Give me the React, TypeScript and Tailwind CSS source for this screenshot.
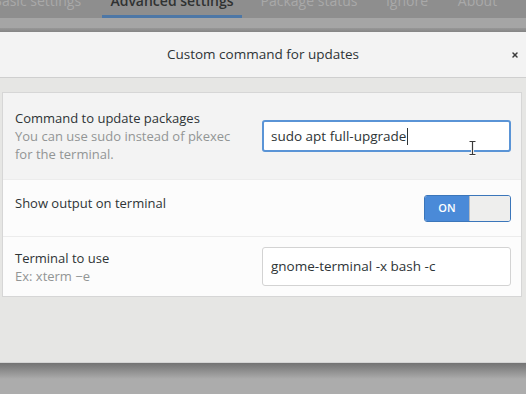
import { X } from "lucide-react";

function Tab({ label, width, active = false, className = "" }: { label: string; width: string; active?: boolean; className?: string }) {
  return (
    <div className={`flex h-[18px] shrink-0 flex-col items-center justify-between ${width} ${className}`}>
      <span className={`-mt-[6px] text-[14px] leading-[14px] whitespace-nowrap ${active ? "text-[13px] font-semibold text-[#303232]" : "text-[#a9a9a9]"}`}>
        {label}
      </span>
      <div className={`h-[3px] w-full ${active ? "bg-[#4d77a6]" : ""}`} />
    </div>
  );
}

function Switch() {
  return (
    <div className="flex h-[27px] w-[87px] overflow-hidden rounded-[3px] border border-[#3b76ba]">
      <div className="flex w-[44px] items-center justify-center bg-[#4a8ad8] text-[11px] font-semibold text-white">ON</div>
      <div className="flex-1 border-l border-[#b8bcc1] bg-[#eeeeed]" />
    </div>
  );
}

export default function App() {
  return (
    <div className="flex h-[394px] w-[526px] flex-col overflow-hidden bg-[#acacac] font-['Open_Sans',sans-serif] text-[13px] text-[#2e3436]">
      {/* dimmed window behind the dialog */}
      <div className="flex h-[18px] gap-[9px] overflow-hidden bg-[#8e8e8e]">
        <Tab label="Basic settings" width="w-[112px]" className="-ml-[19px]" />
        <Tab label="Advanced settings" width="w-[140px]" active />
        <Tab label="Package status" width="w-[116px]" />
        <Tab label="Ignore" width="w-[62px]" />
        <Tab label="About" width="w-[61px]" />
      </div>
      <div className="h-[10px] bg-[#a5a5a5]" />
      <div className="h-[4px] bg-gradient-to-b from-[#979797] to-[#858585]" />

      {/* dialog */}
      <div className="bg-[#e6e6e4]">
        <div className="relative flex h-[46px] items-center justify-center border-b border-[#cfcfcf] bg-[#f3f3f3]">
          <span className="text-[13.5px] text-[#2e3436]">Custom command for updates</span>
          <X className="absolute right-[7px] top-[19px] h-[8px] w-[8px] text-[#3c3c3c]" strokeWidth={4.5} />
        </div>

        <div className="px-[2px] pb-[65px] pt-[14px] pr-[4px]">
          <div className="border border-[#d6d6d6] bg-[#fcfcfc]">
            <div className="flex h-[86px] items-center justify-between bg-[#f3f3f3] pl-[12px] pr-[10px]">
              <div className="leading-[18px]">
                <div>Command to update packages</div>
                <div className="text-[#929595]">You can use sudo instead of pkexec</div>
                <div className="text-[#929595]">for the terminal.</div>
              </div>
              <div className="relative flex h-[32px] w-[249px] items-center rounded-[3px] border-2 border-[#5a94d6] bg-white px-[7px]">
                <span className="text-[13.5px]">sudo apt full-upgrade</span>
                <span className="ml-px h-[17px] w-px bg-[#2e3436]" />
                <svg className="absolute left-[204px] top-[18px]" width="9" height="16" viewBox="0 0 9 16">
                  <path d="M1 1h7M4.5 1v14M1 15h7" stroke="#ffffff" strokeWidth="3" fill="none" />
                  <path d="M1.5 1.5h6M4.5 1.5v13M1.5 14.5h6" stroke="#3a3a3a" strokeWidth="1.2" fill="none" />
                </svg>
              </div>
            </div>

            <div className="flex h-[57px] items-center justify-between border-t border-[#ececec] pl-[12px] pr-[10px]">
              <div className="-mt-[8px]">Show output on terminal</div>
              <Switch />
            </div>

            <div className="flex h-[60px] items-center justify-between border-t border-[#ececec] pl-[12px] pr-[10px]">
              <div className="leading-[18px]">
                <div>Terminal to use</div>
                <div className="text-[#929595]">Ex: xterm −e</div>
              </div>
              <div className="flex h-[39px] w-[249px] items-center rounded-[3px] border border-[#d3d3d3] bg-white px-[8px]">
                <span className="text-[13.5px]">gnome-terminal -x bash -c</span>
              </div>
            </div>
          </div>
        </div>
      </div>

      <div className="h-px bg-[#d4d4d4]" />
      <div className="h-[16px] bg-gradient-to-b from-[#737373] to-[#acacac]" />
    </div>
  );
}
